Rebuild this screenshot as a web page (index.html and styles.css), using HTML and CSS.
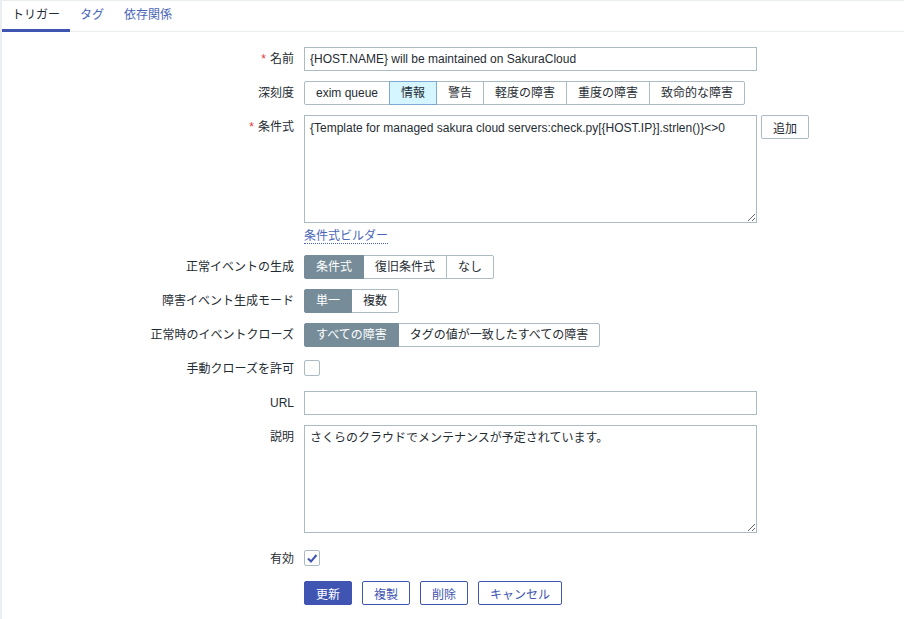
FILE: index.html
```html
<!DOCTYPE html>
<html>

<head>
    <title>トリガー</title>
    <meta charset="utf-8">
    <link rel="stylesheet" href="styles.css">
</head>

<body>
    <div class="page">
        <ul class="tabs">
            <li class="active"><a href="#">トリガー</a></li>
            <li><a href="#">タグ</a></li>
            <li><a href="#">依存関係</a></li>
        </ul>

        <form class="form-list">
            <label class="required">名前</label>
            <div class="field">
                <input type="text" class="wide" value="{HOST.NAME} will be maintained on SakuraCloud">
            </div>

            <label>深刻度</label>
            <div class="field">
                <ul class="radio-list severity">
                    <li>exim queue</li>
                    <li class="selected info">情報</li>
                    <li>警告</li>
                    <li>軽度の障害</li>
                    <li>重度の障害</li>
                    <li>致命的な障害</li>
                </ul>
            </div>

            <label class="required top">条件式</label>
            <div class="field">
                <div class="expr">
                    <textarea class="wide">{Template for managed sakura cloud servers:check.py[{HOST.IP}].strlen()}&lt;&gt;0</textarea>
                    <button type="button" class="btn-grey">追加</button>
                </div>
                <div class="builder"><a href="#">条件式ビルダー</a></div>
            </div>

            <label>正常イベントの生成</label>
            <div class="field">
                <ul class="radio-list">
                    <li class="selected">条件式</li>
                    <li>復旧条件式</li>
                    <li>なし</li>
                </ul>
            </div>

            <label>障害イベント生成モード</label>
            <div class="field">
                <ul class="radio-list">
                    <li class="selected">単一</li>
                    <li>複数</li>
                </ul>
            </div>

            <label>正常時のイベントクローズ</label>
            <div class="field">
                <ul class="radio-list">
                    <li class="selected">すべての障害</li>
                    <li>タグの値が一致したすべての障害</li>
                </ul>
            </div>

            <label>手動クローズを許可</label>
            <div class="field">
                <span class="checkbox"></span>
            </div>

            <label>URL</label>
            <div class="field">
                <input type="text" class="wide" value="">
            </div>

            <label class="top">説明</label>
            <div class="field">
                <textarea class="wide">さくらのクラウドでメンテナンスが予定されています。</textarea>
            </div>

            <label class="enabled-row">有効</label>
            <div class="field enabled-row">
                <span class="checkbox checked">
                    <svg width="14" height="14" viewBox="0 0 14 14">
                        <polyline points="3,7.5 6,10.5 11.5,4" fill="none" stroke="#4054b2" stroke-width="2"/>
                    </svg>
                </span>
            </div>

            <div></div>
            <div class="field buttons">
                <button type="button" class="btn-primary">更新</button>
                <button type="button" class="btn-alt">複製</button>
                <button type="button" class="btn-alt">削除</button>
                <button type="button" class="btn-alt">キャンセル</button>
            </div>
        </form>
    </div>
</body>
</html>
```

FILE: styles.css
```css
* {
    box-sizing: border-box;
}

html, body {
    height: 100%;
}

body {
    margin: 0;
    padding: 1px 0 0 2px;
    background-color: #ebeef0;
    color: #1f2c33;
    font-family: "Liberation Sans", Arial, "Noto Sans CJK JP", sans-serif;
    font-size: 12px;
}

.page {
    background-color: #ffffff;
    min-height: 100%;
}

a {
    color: #4a66b8;
    text-decoration: none;
}

/* Tabs */
.tabs {
    list-style: none;
    margin: 0;
    padding: 0;
    display: flex;
    height: 31px;
    border-bottom: 1px solid #ebeef0;
}

.tabs li {
    height: 31px;
    padding: 0 10px;
    line-height: 28px;
}

.tabs li.active {
    box-shadow: inset 0 -3px 0 #4054b2;
}

.tabs li.active a {
    color: #1f2c33;
}

/* Form */
.form-list {
    display: grid;
    grid-template-columns: 292px 1fr;
    column-gap: 10px;
    row-gap: 10px;
    padding-top: 15px;
}

.form-list > label {
    text-align: right;
    line-height: 24px;
    white-space: nowrap;
}

.required::before {
    content: "*";
    color: #e33734;
    margin-right: 4px;
}

.field {
    min-height: 24px;
    display: flex;
    flex-direction: column;
    align-items: flex-start;
}

input[type="text"], textarea {
    font-family: inherit;
    font-size: 12px;
    color: #1f2c33;
    border: 1px solid #acbbc2;
    border-radius: 0;
    background-color: #ffffff;
    margin: 0;
}

input[type="text"] {
    height: 24px;
    padding: 0 5px;
}

textarea {
    height: 108px;
    padding: 5px 5px;
    line-height: 14px;
    resize: vertical;
}

.wide {
    width: 453px;
}

.expr {
    display: flex;
    align-items: flex-start;
    gap: 4px;
}

.builder {
    margin-top: 4px;
    line-height: 18px;
}

.builder a {
    border-bottom: 1px dotted #4a66b8;
}

/* Segmented radio buttons */
.radio-list {
    list-style: none;
    margin: 0;
    padding: 0;
    display: flex;
}

.radio-list li {
    height: 24px;
    line-height: 22px;
    padding: 0 11px;
    border: 1px solid #acbbc2;
    margin-left: -1px;
    background-color: #ffffff;
    white-space: nowrap;
}

.radio-list li:first-child {
    margin-left: 0;
    border-radius: 2px 0 0 2px;
}

.radio-list li:last-child {
    border-radius: 0 2px 2px 0;
}

.radio-list li.selected {
    background-color: #768d99;
    border-color: #768d99;
    color: #ffffff;
    position: relative;
}

.radio-list li.selected.info {
    background-color: #d6f6ff;
    border-color: #7ea9d2;
    color: #1f2c33;
}

/* Checkbox */
.checkbox {
    display: inline-flex;
    align-items: center;
    justify-content: center;
    width: 16px;
    height: 16px;
    margin-top: 3px;
    border: 1px solid #acbbc2;
    border-radius: 2px;
    background-color: #ffffff;
}

.enabled-row {
    margin-top: 4px;
}

/* Buttons */
button {
    font-family: inherit;
    font-size: 12px;
    height: 24px;
    padding: 0 11px;
    border-radius: 2px;
    cursor: pointer;
}

.btn-grey {
    background-color: #ffffff;
    border: 1px solid #acbbc2;
    color: #1f2c33;
}

.btn-primary {
    background-color: #4054b2;
    border: 1px solid #4054b2;
    color: #ffffff;
}

.btn-alt {
    background-color: #ffffff;
    border: 1px solid #4054b2;
    color: #4054b2;
}

.buttons {
    flex-direction: row;
    gap: 10px;
}
```
